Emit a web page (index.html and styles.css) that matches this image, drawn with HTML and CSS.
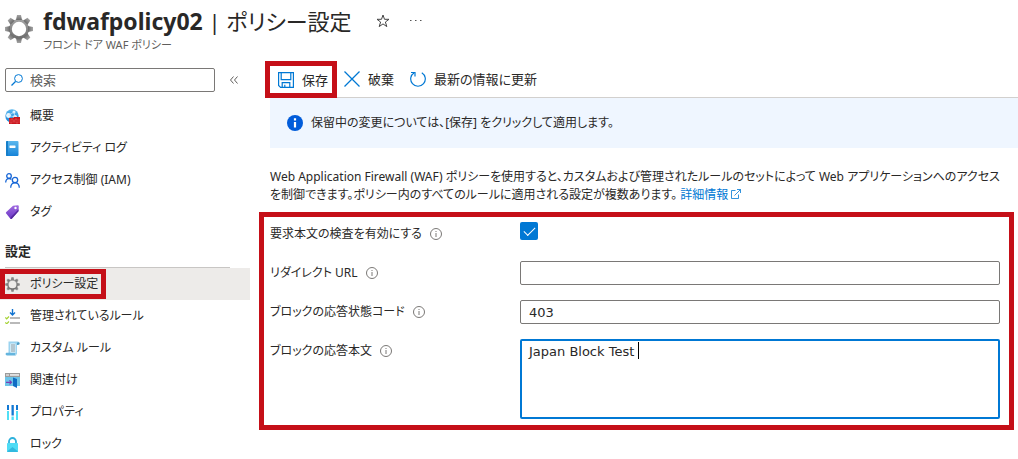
FILE: index.html
```html
<!DOCTYPE html>
<html lang="ja">
<head>
  <meta charset="utf-8">
  <title>fdwafpolicy02 | ポリシー設定</title>
  <link rel="stylesheet" href="styles.css">
</head>
<body>
  <svg class="defs" aria-hidden="true">
    <defs>
      <linearGradient id="grayGrad" x1="0" y1="0" x2="0" y2="1"><stop offset="0" stop-color="#a5a5a5"/><stop offset="1" stop-color="#6b6b6b"/></linearGradient>
      <linearGradient id="blueGrad" x1="0" y1="0" x2="0" y2="1"><stop offset="0" stop-color="#5cb8ee"/><stop offset="1" stop-color="#1583d8"/></linearGradient>
      <linearGradient id="purpleGrad" x1="0" y1="0" x2="0" y2="1"><stop offset="0" stop-color="#a06be0"/><stop offset="1" stop-color="#6a35c4"/></linearGradient>
      <symbol id="gear" viewBox="0 0 28 28">
        <g fill="url(#grayGrad)">
          <path fill-rule="evenodd" d="M14 4a10 10 0 1 0 0 20a10 10 0 1 0 0-20zM14 6.800a7.200 7.200 0 1 1 0 14.400a7.200 7.200 0 1 1 0-14.400z"/>
          <path d="M12 0h4l1 5h-6z"/>
          <path d="M12 0h4l1 5h-6z" transform="rotate(45 14 14)"/>
          <path d="M12 0h4l1 5h-6z" transform="rotate(90 14 14)"/>
          <path d="M12 0h4l1 5h-6z" transform="rotate(135 14 14)"/>
          <path d="M12 0h4l1 5h-6z" transform="rotate(180 14 14)"/>
          <path d="M12 0h4l1 5h-6z" transform="rotate(225 14 14)"/>
          <path d="M12 0h4l1 5h-6z" transform="rotate(270 14 14)"/>
          <path d="M12 0h4l1 5h-6z" transform="rotate(315 14 14)"/>
        </g>
      </symbol>
      <symbol id="info" viewBox="0 0 12 12">
        <circle cx="6" cy="6" r="5.500" fill="none" stroke="#7a7876"/>
        <path d="M6 5v4M6 3v1" stroke="#7a7876"/>
      </symbol>
    </defs>
  </svg>

  <header class="page-header">
    <svg class="header-icon"><use href="#gear"/></svg>
    <div>
      <div class="title-row">
        <h1><b>fdwafpolicy02</b> | ポリシー設定</h1>
        <button class="icon-button" aria-label="お気に入り">
          <svg width="14" height="14" viewBox="0 0 14 14"><path d="M7 1l1.500 4.300H13L9.400 8l1.400 4.600L7 9.900l-3.800 2.700L4.600 8 1 5.300h4.500z" fill="none" stroke="#444"/></svg>
        </button>
        <button class="icon-button" aria-label="その他">
          <svg width="12" height="14" viewBox="0 0 12 14"><path d="M0 6.500h1.500M5 6.500h1.500M10 6.500h1.500" stroke="#555"/></svg>
        </button>
      </div>
      <p class="subtitle">フロント ドア WAF ポリシー</p>
    </div>
  </header>

  <div class="layout">
    <aside class="sidebar">
      <div class="search-row">
        <label class="search-box">
          <svg width="12" height="12" viewBox="0 0 12 12"><path d="M.5 11.500L4.500 7.500" stroke="#0078d4" stroke-width="1.200"/><circle cx="7.500" cy="4.500" r="3.900" fill="none" stroke="#0078d4"/></svg>
          <input type="text" placeholder="検索" aria-label="検索">
        </label>
        <button class="icon-button" aria-label="折りたたむ">
          <svg width="8" height="8" viewBox="0 0 8 8"><path d="M3.500.5L.5 4l3 3.500M7.500.5l-3 3.500 3 3.500" fill="none" stroke="#605e5c"/></svg>
        </button>
      </div>

      <nav>
        <a class="nav-item" href="#">
          <svg class="nav-icon" viewBox="0 0 15 15"><circle cx="7" cy="7" r="6.700" fill="url(#blueGrad)"/><circle cx="3.500" cy="6.500" r="2.400" fill="#e8f6ff"/><circle cx="9" cy="3" r="1.500" fill="#e8f6ff"/><circle cx="10" cy="8" r="2" fill="#e8f6ff"/><path d="M3.500 6.500L9 3l1 5z" fill="none" stroke="#c5e7fb" stroke-width=".7"/><path d="M4 9h4l1-1h6v7H4z" fill="#c8141c"/><path d="M4 11h11M4 13h11M7 9v2M11 9v2M9 11v2M6 13v2M12 13v2" stroke="#ef6a6a" stroke-width=".5"/></svg>
          概要
        </a>
        <a class="nav-item" href="#">
          <svg class="nav-icon" viewBox="0 0 15 15"><rect x="1" width="12.500" height="15" rx="1" fill="url(#blueGrad)"/><path d="M1 1a1 1 0 0 1 1-1h1v15H2a1 1 0 0 1-1-1z" fill="#167ec9"/><rect x="4.500" y="4.500" width="6" height="2.500" rx=".4" fill="#fff"/></svg>
          アクティビティ ログ
        </a>
        <a class="nav-item" href="#">
          <svg class="nav-icon" viewBox="0 0 15 15" fill="none" stroke="#1766d6" stroke-width="1.300"><circle cx="4" cy="3" r="2.300"/><path d="M.7 9.500C.7 7 2 5.500 4 5.500c1 0 1.800.3 2.400 1"/><circle cx="10" cy="7" r="2.700"/><path d="M5.700 14.800c0-3 1.800-5 4.300-5s4.300 2 4.300 5"/></svg>
          アクセス制御 (IAM)
        </a>
        <a class="nav-item" href="#">
          <svg class="nav-icon" viewBox="0 0 15 15"><path d="M1.300 7L8 .8l4.800-.5c.6 0 1 .3 1 .9l-.3 5L7 13.500c-.6.700-1.200.7-1.800.1L1.200 8.600c-.5-.6-.4-1.100.1-1.600z" fill="url(#purpleGrad)"/><path d="M5.200 13.600c.6.600 1.200.6 1.800-.1l6.500-7.300.1-2L6 12z" fill="#552a9e"/><circle cx="10.500" cy="3" r="1.200" fill="#fff"/></svg>
          タグ
        </a>

        <h2 class="nav-heading">設定</h2>
        <a class="nav-item selected" href="#">
          <svg class="nav-icon"><use href="#gear"/></svg>
          ポリシー設定
        </a>
        <a class="nav-item" href="#">
          <svg class="nav-icon" viewBox="0 0 15 15" fill="none"><path d="M7.500 0v6M5 3.500L7.500 6 10 3.500" stroke="#1173d0" stroke-width="1.400"/><path d="M5 9h10M5 14h10" stroke="#a2a2a2" stroke-width="1.600"/><path d="M.3 8.500l1.400 1.300L4 7.500M.3 13.500l1.400 1.300L4 12.500" stroke="#a4d233" stroke-width="1.200"/></svg>
          管理されているルール
        </a>
        <a class="nav-item" href="#">
          <svg class="nav-icon" viewBox="0 0 15 15"><path d="M3.500.5h9.300a1.800 1.800 0 0 1 0 3.600H12v9.400H3.500z" fill="#9bd3f0"/><path d="M12 4V2.300a1.300 1.300 0 1 1 1.300 1.500z" fill="#4e9cc4"/><path d="M5.300 2.500h5.200v10H5.300z" fill="#e6f6fd"/><path d="M6 4h4M6 6h4M6 8h4M6 10h4" stroke="#8297a4"/><path d="M1.800 11.700h8.500v1.500c0 .8.500 1.200 1 1.200H2c-1.800 0-1.800-2.700-.2-2.700z" fill="#65b5de"/></svg>
          カスタム ルール
        </a>
        <a class="nav-item" href="#">
          <svg class="nav-icon" viewBox="0 0 15 15"><path d="M0 0h15v13H0z" fill="#6dc4e8"/><path d="M0 0h15v4H0z" fill="#9b9b9b"/><path d="M5 1.200h9v1.500H5z" fill="#f2f2f2"/><path d="M1 2h3" stroke="#fff"/><path d="M8 4.500l4 1.500v9l-4-2z" fill="#0f6cc4"/><path d="M1 9.300h5M4.500 7.300l2 2-2 2" fill="none" stroke="#7c3db5" stroke-width="1.200"/></svg>
          関連付け
        </a>
        <a class="nav-item" href="#">
          <svg class="nav-icon" viewBox="0 0 15 15"><path d="M2 0h2v5H2zM6.500 0h2.300v10.500H6.500zM11 0h2v5h-2z" fill="#1279d4"/><path d="M2 6h2v9H2zM6.500 11.500h2.300V15H6.500zM11 6h2v9h-2z" fill="#50dff5"/></svg>
          プロパティ
        </a>
        <a class="nav-item" href="#">
          <svg class="nav-icon" viewBox="0 0 15 15"><path d="M4 7V4.500a3.500 3.500 0 0 1 7 0V7" fill="none" stroke="#2eb1dc" stroke-width="1.800"/><rect x="2" y="6" width="11" height="9" rx=".7" fill="#4fdcf5"/><path d="M2 14.500L7.500 10l5.500 4.500a1 1 0 0 1-1 .5H3z" fill="#32b9df"/></svg>
          ロック
        </a>
      </nav>
    </aside>

    <main class="content">
      <div class="toolbar">
        <button class="tool highlight">
          <svg width="16" height="16" viewBox="0 0 16 16" fill="none" stroke="#0078d4" stroke-width="1.200"><path d="M.6.6h14.800v14.800H2.600l-2-2z"/><path d="M3.200.6v7h9.600v-7M4.200 15.400v-4.800h7.600v4.800M6.800 15v-2.200"/></svg>
          保存
        </button>
        <button class="tool">
          <svg width="16" height="16" viewBox="0 0 16 16"><path d="M.5.5l15 15M15.500.5l-15 15" stroke="#0078d4" stroke-width="1.300"/></svg>
          破棄
        </button>
        <button class="tool">
          <svg width="16" height="16" viewBox="0 0 16 16" fill="none" stroke="#0078d4" stroke-width="1.200"><path d="M4.200 1.700a7.300 7.300 0 1 0 7.600 0"/><path d="M1 1.500h4v4"/></svg>
          最新の情報に更新
        </button>
      </div>

      <div class="info-bar">
        <svg width="16" height="16" viewBox="0 0 16 16"><circle cx="8" cy="8" r="8" fill="#015cda"/><path d="M8 7v5.500M8 3.300v2.200" stroke="#fff" stroke-width="2.200"/></svg>
        <span>保留中の変更については、[保存] をクリックして適用します。</span>
      </div>

      <p class="description">Web Application Firewall (WAF) ポリシーを使用すると、カスタムおよび管理されたルールのセットによって Web アプリケーションへのアクセスを制御できます。ポリシー内のすべてのルールに適用される設定が複数あります。 <a href="#">詳細情報
        <svg width="10" height="10" viewBox="0 0 10 10" fill="none" stroke="#0078d4" stroke-width=".8"><path d="M4.500 1.500h-4v8h7v-4M3.500 6.500l6-6M6 .5h3.500V4"/></svg></a></p>

      <form class="settings">
        <div class="field">
          <div class="field-label"><label for="inspect">要求本文の検査を有効にする</label><svg class="info"><use href="#info"/></svg></div>
          <input type="checkbox" id="inspect" checked>
        </div>
        <div class="field">
          <div class="field-label"><label for="redirect">リダイレクト URL</label><svg class="info"><use href="#info"/></svg></div>
          <input type="text" id="redirect">
        </div>
        <div class="field">
          <div class="field-label"><label for="status">ブロックの応答状態コード</label><svg class="info"><use href="#info"/></svg></div>
          <input type="text" id="status" value="403">
        </div>
        <div class="field">
          <div class="field-label"><label for="body">ブロックの応答本文</label><svg class="info"><use href="#info"/></svg></div>
          <div class="textarea-wrap">
            <textarea id="body">Japan Block Test </textarea>
            <span class="caret"></span>
          </div>
        </div>
      </form>
    </main>
  </div>
</body>
</html>
```
FILE: styles.css
```css
*, *::after {
  box-sizing: border-box;
}

body {
  margin: 0;
  overflow: hidden;
  background: #fff;
  color: #292827;
  font-family: "Noto Sans", "Noto Sans CJK JP", sans-serif;
  font-size: 12px;
  line-height: 18px;
  font-feature-settings: "palt";
}

button, input, textarea {
  font: inherit;
  font-size: 13px;
  font-feature-settings: inherit;
  color: inherit;
}

button {
  padding: 0;
  border: none;
  background: none;
  cursor: pointer;
}

svg {
  flex: none;
}

.defs {
  position: absolute;
  width: 0;
  height: 0;
}

.page-header {
  display: flex;
  gap: 10px;
  height: 61px;
  padding: 6px 5px 0;
}

.header-icon {
  width: 28px;
  height: 28px;
  margin-top: 9px;
}

.title-row {
  display: flex;
  align-items: center;
  gap: 20px;
  height: 30px;
}

h1 {
  margin: 0 4px 0 0;
  font-size: 22px;
  line-height: 30px;
  font-weight: 400;
}

h1 b {
  font-size: 23px;
}

.icon-button {
  display: flex;
}

.subtitle {
  margin: 0;
  color: #605e5c;
  font-size: 11px;
}

.layout {
  display: flex;
}

.sidebar {
  flex: none;
  width: 250px;
  padding-top: 7px;
}

.search-row {
  display: flex;
  align-items: center;
  gap: 15px;
  padding-left: 5px;
  margin-bottom: 8px;
}

.search-box {
  display: flex;
  align-items: center;
  gap: 7px;
  width: 210px;
  height: 24px;
  padding: 0 5px;
  border: 1px solid #7a7876;
  border-radius: 2px;
}

.search-box input {
  flex: 1;
  min-width: 0;
  padding: 0;
  border: none;
  outline: none;
}

.search-box input::placeholder {
  color: #605e5c;
}

.nav-item {
  display: flex;
  align-items: center;
  gap: 10px;
  height: 32px;
  padding-left: 5px;
  color: inherit;
  text-decoration: none;
}

.nav-icon {
  width: 15px;
  height: 15px;
}

.nav-heading {
  margin: 0 20px 0 5px;
  padding: 14px 0 7px;
  border-bottom: 1px solid #c8c6c4;
  font-size: 13px;
  line-height: 18px;
}

.nav-item.selected {
  position: relative;
  background: #edebe9;
}

.nav-item.selected::after {
  content: "";
  position: absolute;
  top: 1px;
  left: 0;
  width: 106px;
  height: 30px;
  border: 5px solid #c50f18;
}

.content {
  flex: 1;
  min-width: 0;
  padding-left: 20px;
}

.toolbar {
  display: flex;
  gap: 16px;
  height: 37px;
  border-bottom: 1px solid #d2d0ce;
}

.tool {
  display: flex;
  align-items: center;
  gap: 8px;
}

.tool.highlight {
  height: 37px;
  margin: 0 -9px 0 -5px;
  padding: 0 4px 0 8px;
  border: 5px solid #c50f18;
}

.info-bar {
  display: flex;
  align-items: center;
  gap: 8px;
  height: 50px;
  padding-left: 17px;
  background: #eff6ff;
}

.description {
  margin: 20px 16px 8px 0;
}

.description a {
  color: #0078d4;
  text-decoration: none;
}

.settings {
  margin: 0 4px 0 -11px;
  padding: 5px 9px 6px 6px;
  border: 5px solid #c50f18;
}

.field {
  display: flex;
  margin-bottom: 15px;
}

.field:last-child {
  margin-bottom: 0;
}

.field-label {
  display: flex;
  align-items: center;
  flex: none;
  gap: 8px;
  width: 250px;
  height: 24px;
}

.info {
  width: 12px;
  height: 12px;
}

.field input[type="text"],
.field textarea {
  display: block;
  width: 100%;
  height: 24px;
  margin: 0;
  padding: 0 8px;
  border: 1px solid #7a7876;
  border-radius: 2px;
  outline: none;
  font-family: "DejaVu Sans", "Noto Sans CJK JP", sans-serif;
}

.field input[type="checkbox"] {
  appearance: none;
  width: 18px;
  height: 18px;
  margin: 0;
  border-radius: 2px;
  background: #0078d4;
}

.field input[type="checkbox"]::after {
  content: "";
  display: block;
  width: 11px;
  height: 6px;
  margin: 5px 0 0 4px;
  border: solid #fff;
  border-width: 0 0 1px 1px;
  transform: rotate(-45deg);
}

.textarea-wrap {
  position: relative;
  flex: 1;
}

.field textarea {
  height: 80px;
  padding: 2px 7px;
  border: 2px solid #0078d4;
  resize: none;
}

.caret {
  position: absolute;
  top: 3px;
  left: 118px;
  width: 1px;
  height: 17px;
  background: #000;
}
```
